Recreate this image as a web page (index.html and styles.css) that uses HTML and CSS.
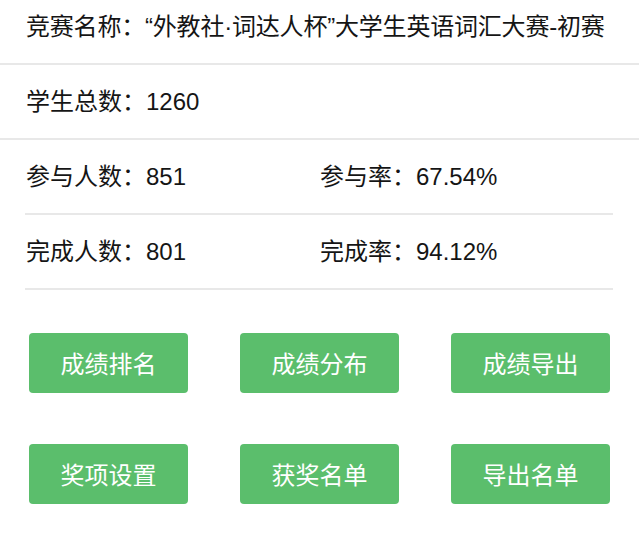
FILE: index.html
```html
<!DOCTYPE html>
<html lang="zh-CN">
<head>
<meta charset="utf-8">
<title>竞赛详情</title>
<link rel="stylesheet" href="styles.css">
</head>
<body>
<div class="page">
  <div class="row row-first"><span class="title">竞赛名称：“外教社·词达人杯”大学生英语词汇大赛-初赛</span></div>
  <div class="row row-full">学生总数：1260</div>
  <div class="stats">
    <div class="row row-inset">
      <div class="cell">参与人数：851</div>
      <div class="cell">参与率：67.54%</div>
    </div>
    <div class="row row-inset">
      <div class="cell">完成人数：801</div>
      <div class="cell">完成率：94.12%</div>
    </div>
  </div>
  <div class="actions">
    <button class="btn">成绩排名</button>
    <button class="btn">成绩分布</button>
    <button class="btn">成绩导出</button>
    <button class="btn">奖项设置</button>
    <button class="btn">获奖名单</button>
    <button class="btn">导出名单</button>
  </div>
</div>
</body>
</html>
```
FILE: styles.css
```css
html, body {
  margin: 0;
  padding: 0;
  background: #ffffff;
}
.page {
  width: 639px;
  font-family: "Liberation Sans", "Noto Sans CJK SC", sans-serif;
  font-size: 24px;
  color: #151515;
}
.row {
  display: flex;
  align-items: center;
  box-sizing: border-box;
  border-bottom: 2px solid #e8e8e8;
  white-space: nowrap;
}
.row-first {
  height: 65px;
  padding: 0 0 14px 26px;
}
.title {
  letter-spacing: -0.2px;
}
.row-full {
  height: 75px;
  padding: 0 0 5px 26px;
}
.stats {
  padding: 0 26px 0 25px;
}
.row-inset {
  height: 75px;
  padding-bottom: 5px;
  display: grid;
  grid-template-columns: 1fr 1fr;
  align-items: center;
}
.cell {
  padding-left: 1px;
}
.actions {
  display: grid;
  grid-template-columns: repeat(3, 159px);
  justify-content: space-between;
  row-gap: 51px;
  padding: 43px 29px 0 29px;
}
.btn {
  height: 60px;
  border: none;
  border-radius: 4px;
  background: #5bbe6c;
  color: #ffffff;
  font-family: "Liberation Sans", "Noto Sans CJK SC", sans-serif;
  font-size: 24px;
  padding: 0 0 2px 0;
}
```
